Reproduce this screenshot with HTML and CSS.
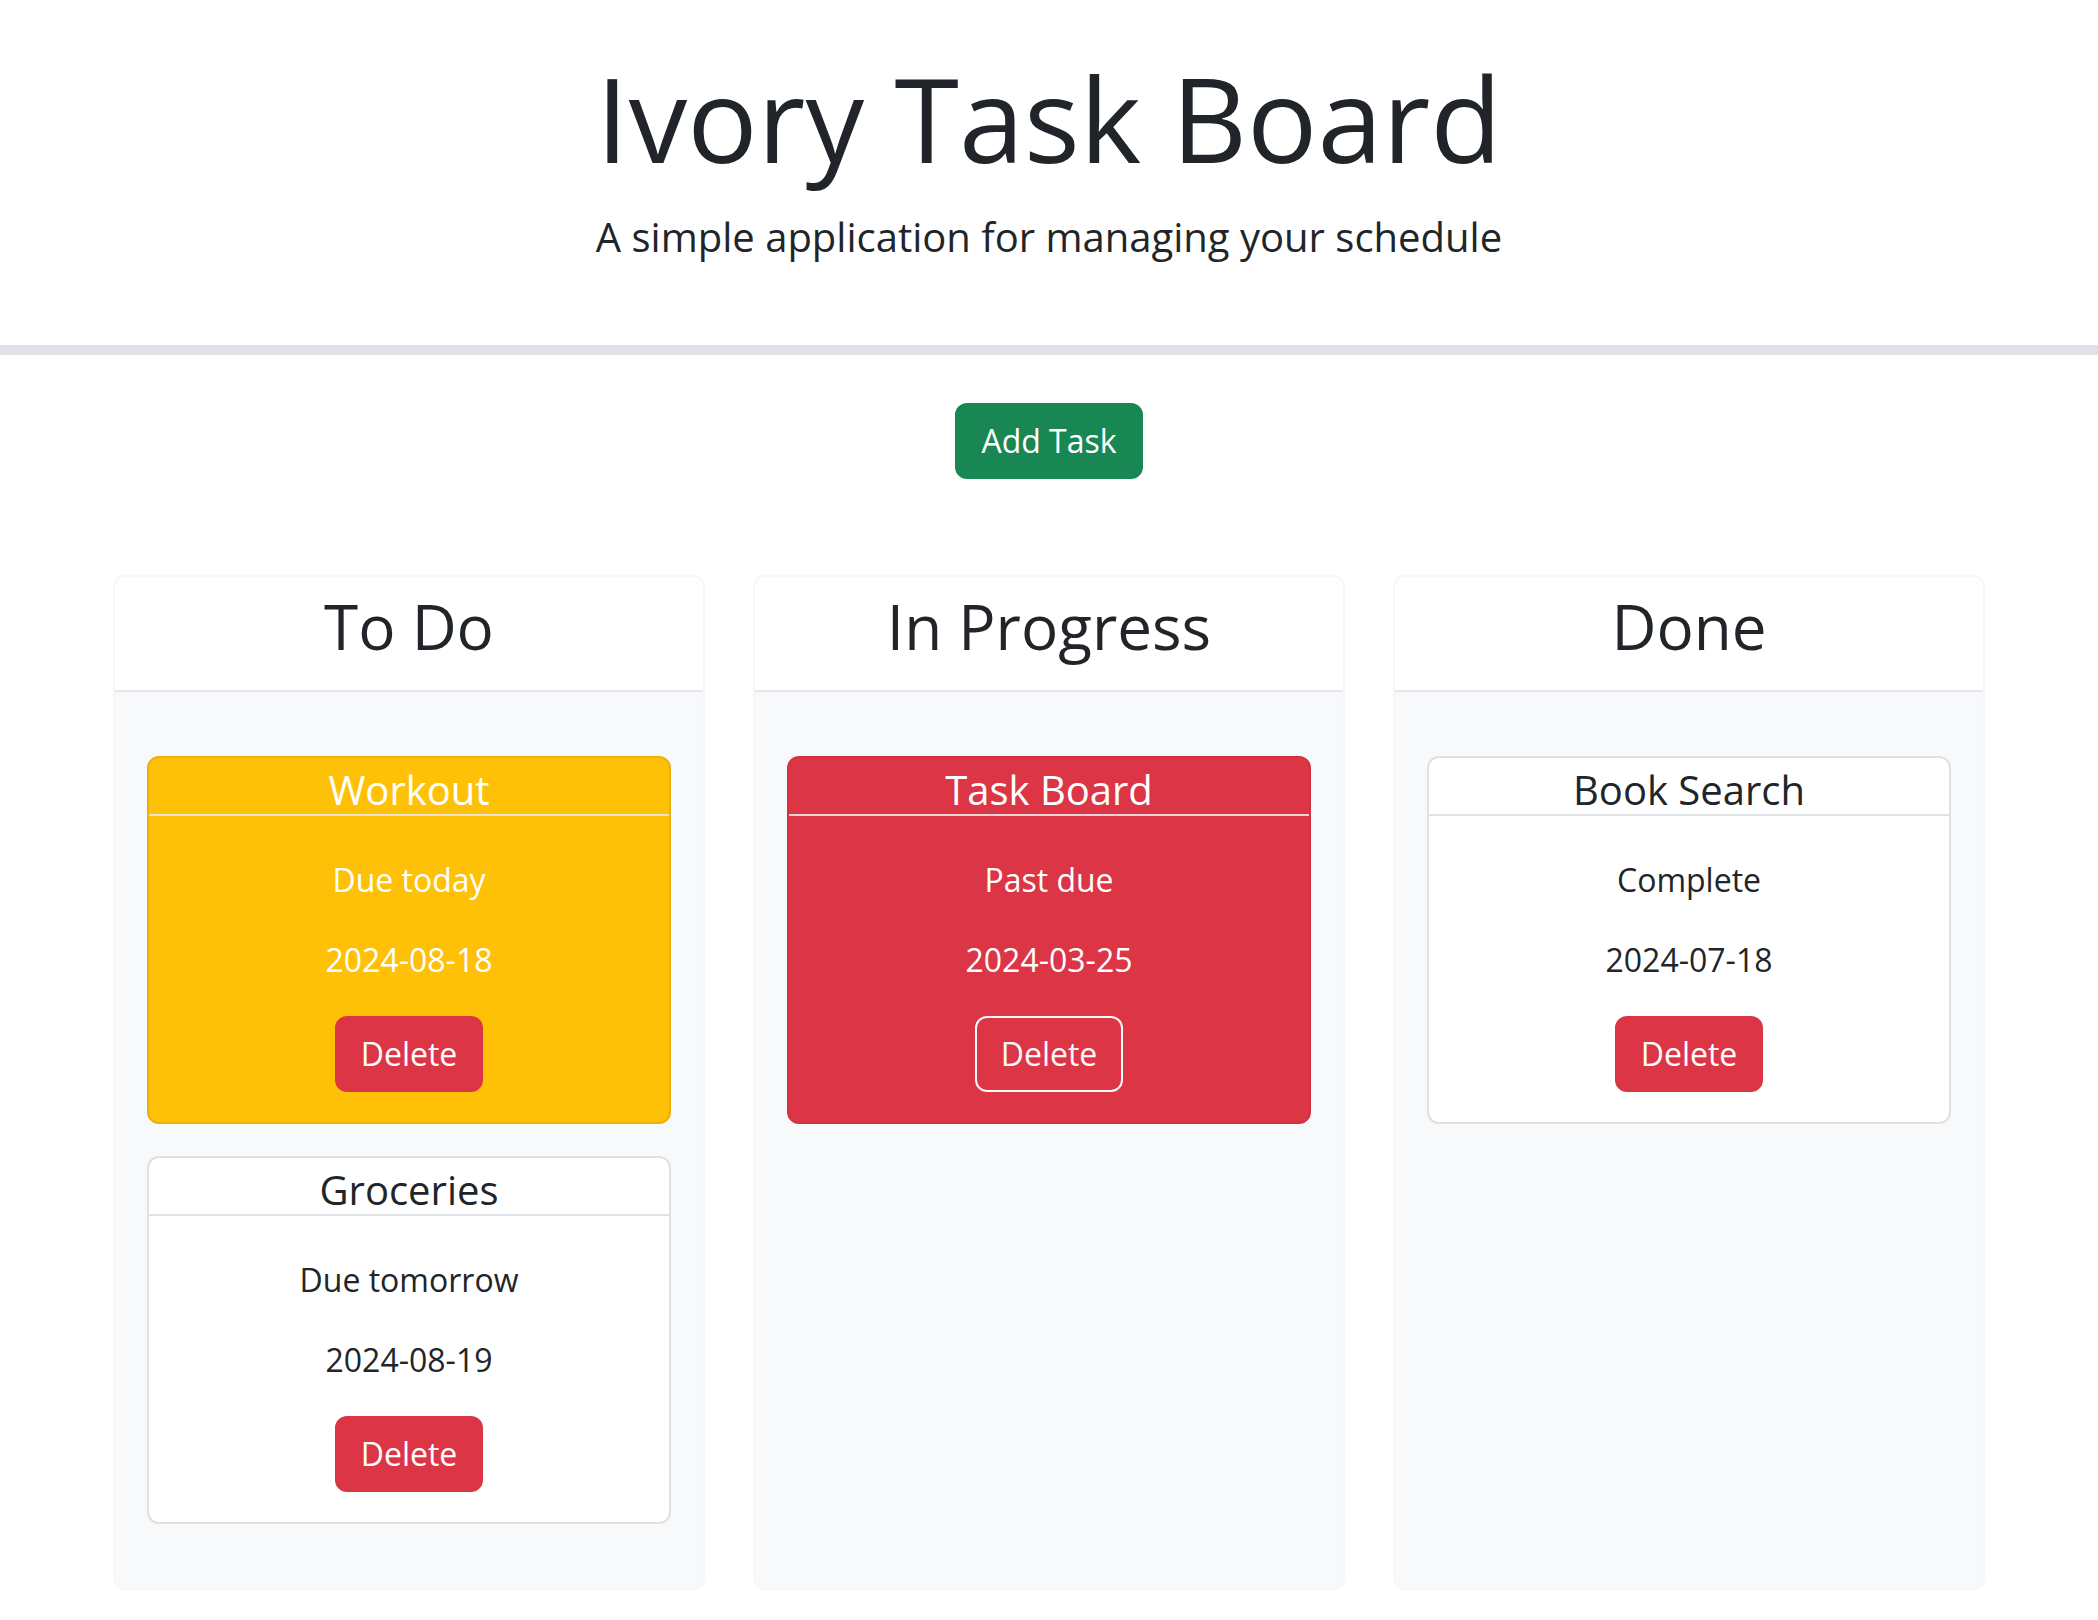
FILE: index.html
```html
<!DOCTYPE html>
<html lang="en">
<head>
<meta charset="utf-8">
<title>Ivory Task Board</title>
<link rel="stylesheet" href="styles.css">
</head>
<body>
<header class="site-header">
  <h1 class="title">Ivory Task Board</h1>
  <p class="lead">A simple application for managing your schedule</p>
</header>
<main class="board">
  <div class="actions">
    <button class="btn btn-success" type="button">Add Task</button>
  </div>
  <div class="lanes">
    <section class="lane">
      <div class="lane-header"><h2>To Do</h2></div>
      <div class="lane-body">
        <article class="task task-warning">
          <div class="task-header">Workout</div>
          <div class="task-body">
            <p>Due today</p>
            <p>2024-08-18</p>
            <button class="btn btn-danger" type="button">Delete</button>
          </div>
        </article>
        <article class="task">
          <div class="task-header">Groceries</div>
          <div class="task-body">
            <p>Due tomorrow</p>
            <p>2024-08-19</p>
            <button class="btn btn-danger" type="button">Delete</button>
          </div>
        </article>
      </div>
    </section>
    <section class="lane">
      <div class="lane-header"><h2>In Progress</h2></div>
      <div class="lane-body">
        <article class="task task-danger">
          <div class="task-header">Task Board</div>
          <div class="task-body">
            <p>Past due</p>
            <p>2024-03-25</p>
            <button class="btn btn-outline-light" type="button">Delete</button>
          </div>
        </article>
      </div>
    </section>
    <section class="lane">
      <div class="lane-header"><h2>Done</h2></div>
      <div class="lane-body">
        <article class="task">
          <div class="task-header">Book Search</div>
          <div class="task-body">
            <p>Complete</p>
            <p>2024-07-18</p>
            <button class="btn btn-danger" type="button">Delete</button>
          </div>
        </article>
      </div>
    </section>
  </div>
</main>
</body>
</html>
```
FILE: styles.css
```css
* { box-sizing: border-box; }

body {
  margin: 0;
  background: #fff;
  color: #212529;
  font-family: "Open Sans", "Noto Sans", "Liberation Sans", sans-serif;
  font-size: 32px;
  line-height: 1.5;
}

.site-header {
  padding: 48px 48px;
  text-align: center;
  border-bottom: 10px solid #dee2e6;
}

.title {
  margin: 0 0 19px;
  font-size: 117px;
  line-height: 140px;
  font-weight: 400;
}

.lead {
  margin: 0 0 30px;
  font-size: 40px;
  line-height: 60px;
  font-weight: 400;
}

.board {
  padding-bottom: 32px;
}

.actions {
  display: flex;
  justify-content: center;
  margin-top: 48px;
}

.btn {
  font-family: inherit;
  font-size: 32px;
  line-height: 48px;
  padding: 12px 24px;
  border: 2px solid transparent;
  border-radius: 12px;
  color: #fff;
  cursor: pointer;
}

.btn-success { background: #198754; border-color: #198754; }
.btn-danger { background: #dc3545; border-color: #dc3545; }
.btn-outline-light { background: transparent; border-color: #f8f9fa; color: #f8f9fa; }

.lanes {
  width: 1872px;
  margin: 96px auto 0;
  display: grid;
  grid-template-columns: repeat(3, 1fr);
  gap: 48px;
}

.lane {
  display: flex;
  flex-direction: column;
  border: 2px solid #f6f7f8;
  border-radius: 12px;
  background: #f8f9fa;
  overflow: hidden;
}

.lane-header {
  background: #fff;
  padding: 12px 32px 27px;
  border-bottom: 2px solid #e3e5e8;
  text-align: center;
}

.lane-header h2 {
  margin: 0;
  font-size: 62px;
  line-height: 74px;
  font-weight: 400;
}

.lane-body {
  flex: 1;
  display: flex;
  flex-direction: column;
  gap: 32px;
  padding: 64px 32px;
}

.task {
  background: #fff;
  border: 2px solid rgba(0, 0, 0, 0.12);
  border-radius: 12px;
  text-align: center;
}

.task-warning {
  background: #ffc107;
  color: #fff;
  border-color: #e8b00a;
}

.task-danger {
  background: #dc3545;
  color: #fff;
  border-color: #d23343;
}

.task-header {
  padding: 8px 32px 0;
  font-size: 40px;
  line-height: 48px;
  border-bottom: 2px solid #dee2e6;
}

.task-warning .task-header { border-bottom-color: #e6e2d6; }
.task-danger .task-header { border-bottom-color: #e4d2d4; }

.task-body {
  padding: 40px 32px 30px;
}

.task-body p {
  margin: 0 0 32px;
  line-height: 48px;
}

.task-body .btn {
  display: inline-block;
}
```
